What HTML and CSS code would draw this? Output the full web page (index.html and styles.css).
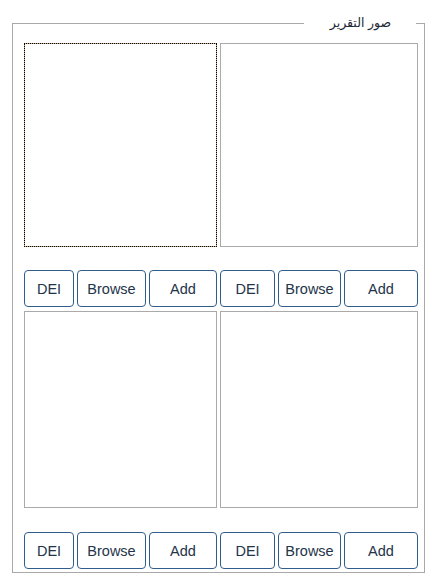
FILE: index.html
```html
<!DOCTYPE html>
<html lang="ar" dir="rtl">
<head>
    <meta charset="UTF-8">
    <meta name="viewport" content="width=device-width, initial-scale=1.0">
    <title>صور التقرير</title>
    <link rel="stylesheet" href="styles.css">
</head>
<body>

    <fieldset class="photos">
        <legend>صور التقرير</legend>

        <div class="photo-grid">
            <div class="cell cell-wide">
                <div class="photo photo-top"></div>
                <div class="btns btns-wide">
                    <button>Add</button>
                    <button>Browse</button>
                    <button>DEI</button>
                </div>
            </div>
            <div class="cell cell-narrow">
                <div class="photo photo-top active"></div>
                <div class="btns btns-narrow">
                    <button>Add</button>
                    <button>Browse</button>
                    <button>DEI</button>
                </div>
            </div>
            <div class="cell cell-wide">
                <div class="photo photo-bottom"></div>
                <div class="btns btns-wide btns-last">
                    <button>Add</button>
                    <button>Browse</button>
                    <button>DEI</button>
                </div>
            </div>
            <div class="cell cell-narrow">
                <div class="photo photo-bottom"></div>
                <div class="btns btns-narrow btns-last">
                    <button>Add</button>
                    <button>Browse</button>
                    <button>DEI</button>
                </div>
            </div>
        </div>
    </fieldset>

</body>
</html>
```

FILE: styles.css
```css
* {
    box-sizing: border-box;
}
body {
    margin: 0;
    background: white;
    font-family: "Liberation Sans", "DejaVu Sans", Arial, sans-serif;
}
.photos {
    width: 413px;
    margin: 15px 11px 0 12px;
    padding: 12px 6px 3px 11px;
    border: 1px solid #a9a9a9;
}
legend {
    padding: 0 25px 0 26px;
    margin-right: 2px;
    font-size: 12.5px;
    line-height: 16px;
    color: #1f2a38;
}
.photo-grid {
    display: grid;
    grid-template-columns: 198px 193px;
    column-gap: 3px;
    row-gap: 4px;
}
.photo {
    border: 1px solid #aaa;
    background: white;
}
.photo.active {
    border: 1px dotted #000;
    background: linear-gradient(#fff, #fff) padding-box, #c9a878 border-box;
}
.photo-top {
    height: 204px;
}
.photo-bottom {
    height: 197px;
}
.btns {
    display: grid;
    column-gap: 3px;
    margin-top: 23px;
}
.btns-last {
    margin-top: 24px;
}
.btns-wide {
    grid-template-columns: 74px 63px 55px;
}
.btns-narrow {
    grid-template-columns: 68px 69px 50px;
}
.btns button {
    height: 37px;
    padding: 0;
    background: white;
    border: 1px solid #2f5d8c;
    border-radius: 4px;
    color: #243449;
    font-family: "Liberation Sans", Arial, sans-serif;
    font-size: 14.5px;
    cursor: pointer;
}
.btns button:hover {
    background: #eef3f8;
}
```
